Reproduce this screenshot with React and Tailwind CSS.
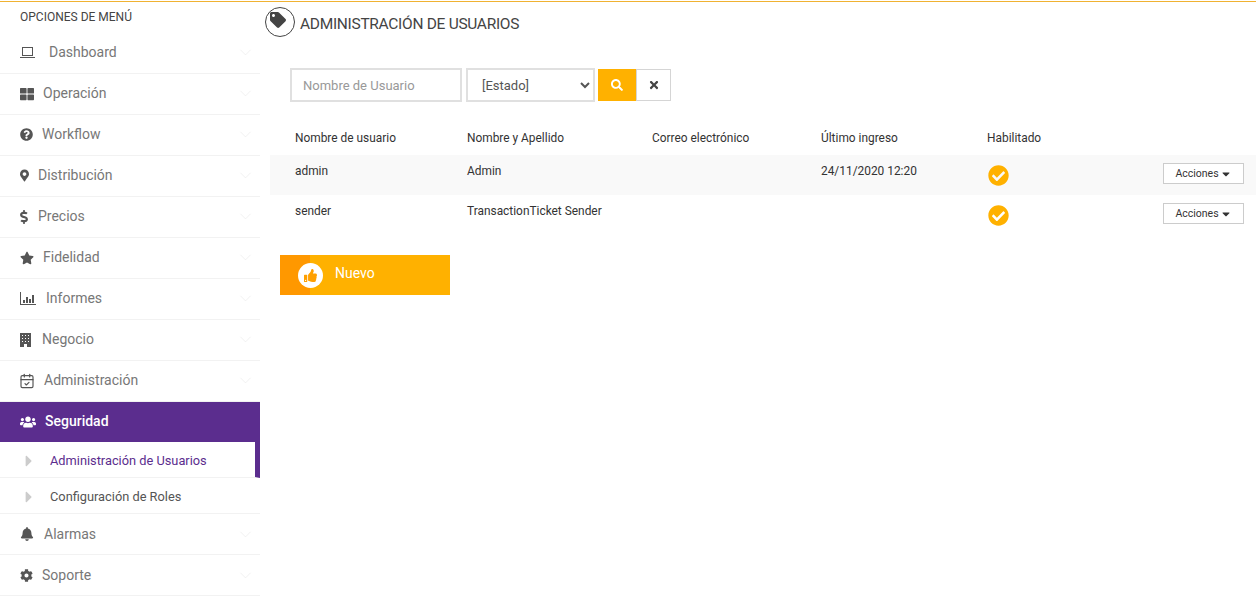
import React from 'react';
import {
  FaThLarge, FaQuestionCircle, FaMapMarkerAlt, FaDollarSign, FaStar,
  FaUsers, FaBell, FaCog, FaTag, FaSearch, FaTimes, FaCheckCircle, FaThumbsUp,
  FaCaretDown, FaCaretRight,
} from 'react-icons/fa';
import { ChevronDown, CalendarCheck } from 'lucide-react';

const LaptopIcon = () => (
  <svg width="15" height="12" viewBox="0 0 15 12" fill="none" stroke="currentColor">
    <rect x="2.5" y="0.5" width="10" height="8" />
    <path d="M0 10.5h15" />
  </svg>
);

const BarsIcon = () => (
  <svg width="16" height="13" viewBox="0 0 16 13" fill="currentColor">
    <path d="M0 0h1v12h15v1H0z" />
    <path d="M3 8h2v3H3zM6 5h2v6H6zM9 7h2v4H9zM12 3h2v8h-2z" />
  </svg>
);

const BuildingIcon = () => (
  <svg width="11" height="14" viewBox="0 0 11 14" fill="currentColor">
    <path fillRule="evenodd" d="M0 0h11v14H0zM2 2v1h1V2zM5 2v1h1V2zM8 2v1h1V2zM2 5v1h1V5zM5 5v1h1V5zM8 5v1h1V5zM2 8v1h1V8zM5 8v1h1V8zM8 8v1h1V8zM4 11v3h3v-3z" />
  </svg>
);

const menuTop = [
  { label: 'Dashboard', icon: <LaptopIcon />, gap: 'ml-[14px]' },
  { label: 'Operación', icon: <FaThLarge size={14} />, gap: 'ml-[9px]' },
  { label: 'Workflow', icon: <FaQuestionCircle size={13} />, gap: 'ml-[9px]' },
  { label: 'Distribución', icon: <FaMapMarkerAlt className="w-[9px] h-[13px]" />, gap: 'ml-[9px]' },
  { label: 'Precios', icon: <FaDollarSign className="w-[8px] h-[14px]" />, gap: 'ml-[10px]' },
  { label: 'Fidelidad', icon: <FaStar size={14} />, gap: 'ml-[9px]' },
  { label: 'Informes', icon: <BarsIcon />, gap: 'ml-[10px]' },
  { label: 'Negocio', icon: <BuildingIcon />, gap: 'ml-[11px]' },
  { label: 'Administración', icon: <CalendarCheck size={16} strokeWidth={1.75} className="-ml-px" />, gap: 'ml-[9px]' },
];

const menuBottom = [
  { label: 'Alarmas', icon: <FaBell size={14} />, gap: 'ml-[10px]' },
  { label: 'Soporte', icon: <FaCog size={13} />, gap: 'ml-[9px]' },
];

const MenuItem = ({ item, raised }) => (
  <div className={`h-[41px] flex items-center pl-5 pr-[5px] border-b border-[#f2f2f2] text-[#555] ${raised ? 'pb-px' : ''}`}>
    <span className="flex">{item.icon}</span>
    <span className={`${item.gap} text-[14px] text-[#777]`}>{item.label}</span>
    <ChevronDown size={19} strokeWidth={0.7} className="ml-auto text-[#e6e6e6]" />
  </div>
);

const SubItem = ({ label, active }) => (
  <div className={`h-9 flex items-center pl-[20px] pt-[2px] border-b border-[#f2f2f2] text-[12.8px] ${active ? 'text-[#5b2d8e] border-r-[5px] border-r-[#5b2d8e]' : 'text-[#555]'}`}>
    <FaCaretRight size={18} className="text-[#ccc]" />
    <span className="ml-[12px]">{label}</span>
  </div>
);

const users = [
  { user: 'admin', name: 'Admin', last: '24/11/2020 12:20' },
  { user: 'sender', name: 'TransactionTicket Sender', last: '' },
];

export default function App() {
  return (
    <div className="min-h-[597px] bg-white font-['Roboto',sans-serif] overflow-hidden">
      <div className="h-[2px] border-b border-[#f0b232]"></div>
      <div className="flex">
        <aside className="w-[260px] shrink-0">
          <div className="h-[31px] pl-5 pt-[8px] text-[12px] leading-[15px] text-[#444]">OPCIONES DE MENÚ</div>
          {menuTop.map((item) => <MenuItem key={item.label} item={item} raised />)}
          <div className="h-10 flex items-center pl-5 pb-px bg-[#5b2d8e] text-white">
            <FaUsers size={16} />
            <span className="ml-[9px] text-[14px] font-medium">Seguridad</span>
          </div>
          <SubItem label="Administración de Usuarios" active />
          <SubItem label="Configuración de Roles" />
          {menuBottom.map((item) => <MenuItem key={item.label} item={item} />)}
        </aside>

        <main className="flex-1 min-w-0 pl-[5px]">
          <div className="flex items-start h-[37px] pt-[5px]">
            <span className="w-[30px] h-[30px] rounded-full border border-[#444] flex items-center justify-center text-[#444]">
              <FaTag size={16} className="-mt-1 -ml-1" />
            </span>
            <h1 className="ml-[5px] mt-[5px] text-[15.5px] leading-[24px] text-[#444] tracking-[-0.3px]">ADMINISTRACIÓN DE USUARIOS</h1>
          </div>

          <div className="flex items-center mt-[29px] ml-[25px]">
            <input
              placeholder="Nombre de Usuario"
              className="w-[172px] h-[34px] border-2 border-[#e0e0e0] pl-[11px] pr-2 text-[13px] text-[#555] placeholder:text-[#999] outline-none"
            />
            <select className="ml-[4px] w-[129px] h-[34px] border-2 border-[#e0e0e0] pl-[10px] text-[13px] text-[#555] bg-white outline-none">
              <option>[Estado]</option>
            </select>
            <button className="ml-[3px] w-[38px] h-8 bg-[#ffb100] text-white flex items-center justify-center">
              <FaSearch size={12} />
            </button>
            <button className="w-[35px] h-8 border border-[#d5d5d5] text-[#444] flex items-center justify-center">
              <FaTimes size={12} />
            </button>
          </div>

          <table className="mt-[18px] ml-[5px] w-[986px] table-fixed text-[11.9px] text-[#333]">
            <thead>
              <tr className="h-[35px] text-left">
                <th className="w-[197px] pl-[25px] pt-[2px] font-normal">Nombre de usuario</th>
                <th className="w-[185px] pt-[2px] font-normal">Nombre y Apellido</th>
                <th className="w-[169px] pt-[2px] font-normal">Correo electrónico</th>
                <th className="w-[166px] pt-[2px] font-normal">Último ingreso</th>
                <th className="pt-[2px] font-normal">Habilitado</th>
                <th className="w-[93px]"></th>
              </tr>
            </thead>
            <tbody>
              {users.map((u, i) => (
                <tr key={u.user} className={`h-10 ${i === 0 ? 'bg-[#f9f9f9]' : ''}`}>
                  <td className="pl-[25px] align-top pt-[8px]">{u.user}</td>
                  <td className="align-top pt-[8px]">{u.name}</td>
                  <td></td>
                  <td className="align-top pt-[8px]">{u.last}</td>
                  <td className="align-top pt-[10px]">
                    <FaCheckCircle size={21} className="text-[#ffb100] ml-[1px]" />
                  </td>
                  <td className="align-top pt-2">
                    <button className="w-[81px] h-[21px] border border-[#ccc] bg-white text-[10.5px] text-[#333] flex items-center justify-center gap-[1px]">
                      Acciones <FaCaretDown size={12} />
                    </button>
                  </td>
                </tr>
              ))}
            </tbody>
          </table>

          <button className="mt-5 ml-[15px] w-[170px] h-10 flex items-center bg-[#ffb100] text-white text-[14px]">
            <span className="w-[30px] h-full bg-[#ff9800] relative shrink-0">
              <span className="absolute left-[18px] top-[8px] w-[25px] h-[25px] rounded-full bg-white flex items-center justify-center text-[#ffa000]">
                <FaThumbsUp size={13} />
              </span>
            </span>
            <span className="ml-[25px] -mt-[4px]">Nuevo</span>
          </button>
        </main>
      </div>
    </div>
  );
}
